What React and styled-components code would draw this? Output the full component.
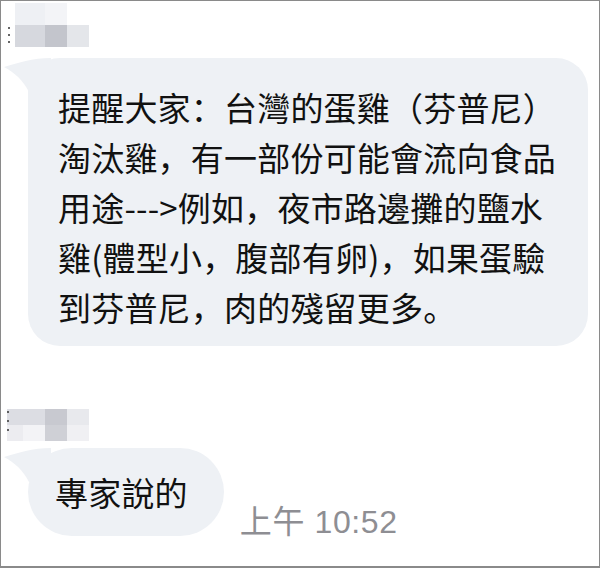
import React from 'react'
import styled, { createGlobalStyle } from 'styled-components'

const Global = createGlobalStyle`
  html, body { margin: 0; padding: 0; background: #fff; }
  body { font-family: "Noto Sans CJK SC", "Noto Sans CJK TC", sans-serif; }
`

const Frame = styled.div`
  box-sizing: border-box;
  width: 600px;
  height: 568px;
  border: 1px solid #8a8a8a;
  border-bottom-width: 2px;
  background: #fff;
  overflow: hidden;
  display: flex;
  flex-direction: column;
`

const Group = styled.div`
  display: flex;
  flex-direction: column;
  margin-top: ${p => p.top}px;
`

const NameMosaic = styled.div`
  display: grid;
  grid-template-columns: ${p => p.cols};
  grid-auto-rows: ${p => p.rowH}px;
  margin-left: ${p => p.left}px;
  width: max-content;
  position: relative;
`

const Cell = styled.div`
  background: ${p => p.c};
`

const Dots = styled.div`
  position: absolute;
  left: ${p => p.left}px;
  top: ${p => p.top}px;
  display: flex;
  flex-direction: column;
  gap: ${p => p.gap}px;
`

const Dot = styled.span`
  width: 2px;
  height: 2px;
  background: #333;
  border-radius: 1px;
`

const Row = styled.div`
  display: flex;
  align-items: flex-end;
  margin-top: ${p => p.top}px;
  padding-left: 27px;
`

const Bubble = styled.div`
  position: relative;
  background: #eef1f5;
  color: #111;
  font-family: "Noto Sans CJK SC", "Noto Sans CJK TC", sans-serif;
  font-size: 33px;
  line-height: 50px;
  letter-spacing: 0.2px;
  border-radius: ${p => p.radius}px;
  padding: ${p => p.pad};
  white-space: nowrap;
  ${p => p.width ? `width: ${p.width}px; box-sizing: border-box;` : ''}
  ${p => p.height ? `height: ${p.height}px; box-sizing: border-box; display: flex; align-items: center;` : ''}
`

const Tail = styled.svg`
  position: absolute;
  left: -27px;
  top: 0;
`

const Time = styled.div`
  font-family: "Liberation Sans", "Noto Sans CJK TC", sans-serif;
  font-size: 32px;
  line-height: 32px;
  letter-spacing: 0.6px;
  color: #8e8e93;
  margin-left: 16px;
  margin-bottom: -2px;
  white-space: nowrap;
`

const BubbleTail = () => (
  <Tail width="50" height="40" viewBox="0 0 50 40">
    <path d="M50 0 C 32 0, 16 5, 3 9 C 14 15, 22 22, 28 34 L 50 40 Z" fill="#eef1f5" />
  </Tail>
)

const firstName = [
  '#eef0f4', '#f3f4f7', '#ffffff',
  '#d6d8de', '#c3c5cc', '#e4e6ea'
]

const secondName = [
  '#dcdde3', '#dcdde3', '#c8c9d0', '#e8e9ed',
  '#ececf0', '#f3f3f6', '#cfd0d6', '#f0f0f3'
]

const lines = [
  '提醒大家：台灣的蛋雞（芬普尼）',
  '淘汰雞，有一部份可能會流向食品',
  '用途--->例如，夜市路邊攤的鹽水',
  '雞(體型小，腹部有卵)，如果蛋驗',
  '到芬普尼，肉的殘留更多。'
]

export default function App() {
  return (
    <>
      <Global />
      <Frame>
        <Group top={2}>
          <NameMosaic cols="30px 22px 22px" rowH={22} left={14}>
            {firstName.map((c, i) => <Cell key={i} c={c} />)}
            <Dots left={-7} top={24} gap={5}>
              <Dot /><Dot /><Dot />
            </Dots>
          </NameMosaic>
          <Row top={11}>
            <Bubble radius={32} pad="24px 28px 14px 30px" width={560}>
              <BubbleTail />
              {lines.map((l, i) => <div key={i}>{l}</div>)}
            </Bubble>
          </Row>
        </Group>
        <Group top={63}>
          <NameMosaic cols="16px 22px 22px 22px" rowH={16} left={6}>
            {secondName.map((c, i) => <Cell key={i} c={c} />)}
            <Dots left={0} top={2} gap={7}>
              <Dot /><Dot /><Dot />
            </Dots>
          </NameMosaic>
          <Row top={7}>
            <Bubble radius={44} pad="0 36px 0 27px" height={88}>
              <BubbleTail />
              專家說的
            </Bubble>
            <Time>上午 10:52</Time>
          </Row>
        </Group>
      </Frame>
    </>
  )
}
